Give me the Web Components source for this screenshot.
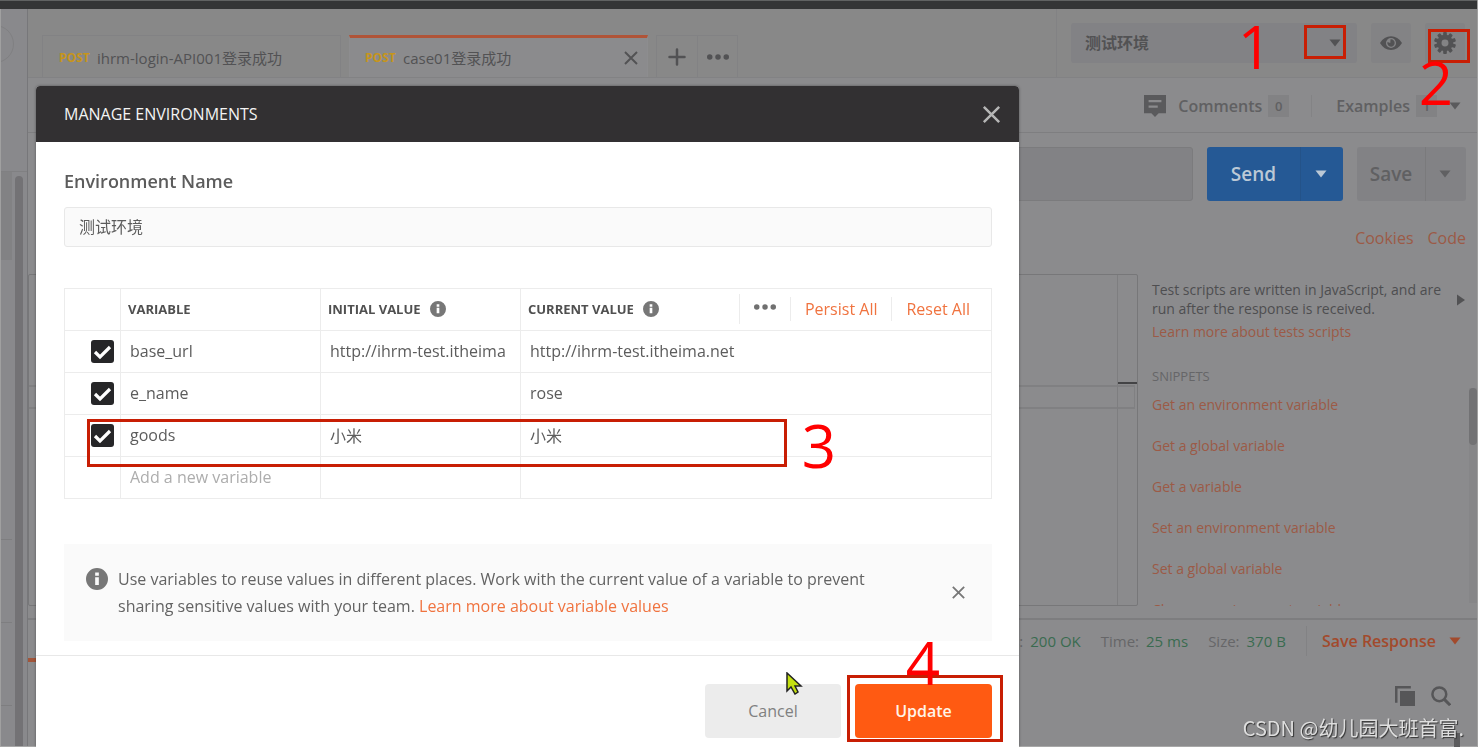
<!DOCTYPE html>
<html lang="en">
<head>
<meta charset="utf-8">
<title>Manage Environments</title>
<style>
  :root {
    --bg: #8b8b8d; --bar: #888888; --line: #7e7e80; --field: #828285;
    --ink: #525254; --muted: #666668; --accent: #9c5a46; --green: #3a6b50;
    --m-line: #ececec; --m-ink: #5c5c5c; --m-accent: #f0733f;
    font-family: "Open Sans", "Noto Sans CJK SC", sans-serif;
  }
  html, body { height: 100%; }
  body { margin: 0; overflow: hidden; background: var(--bg); color: var(--ink); font-size: 16px; }
</style>
</head>
<body>
<api-workspace></api-workspace>
<env-dialog heading="MANAGE ENVIRONMENTS"></env-dialog>
<step-marks></step-marks>

<script>
const BASE = `*{box-sizing:border-box} button,input,select{font:inherit;color:inherit;border:0;background:none;padding:0;margin:0;border-radius:0}
a{color:inherit;text-decoration:none} p,h1,h2,h3{margin:0;font:inherit}`;

function define(name, render) {
  customElements.define(name, class extends HTMLElement {
    connectedCallback() {
      if (this.shadowRoot) return;
      const t = document.createElement('template');
      t.innerHTML = '<style>' + BASE + '</style>' + render(this);
      this.attachShadow({ mode: 'open' }).append(t.content.cloneNode(true));
    }
  });
}

const gearTeeth = Array.from({ length: 10 }, (_, i) =>
  `<rect x="10" y="0" width="4" height="6" rx="1" transform="rotate(${i * 36} 12 12)"/>`).join('');
const ICONS = {
  close: '<path d="M4 4 20 20M20 4 4 20" fill="none" stroke="currentColor" stroke-width="2.6"/>',
  plus: '<path d="M12 3V21M3 12H21" fill="none" stroke="currentColor" stroke-width="3" stroke-linecap="round"/>',
  dots: '<circle cx="3" cy="12" r="3"/><circle cx="12" cy="12" r="3"/><circle cx="21" cy="12" r="3"/>',
  down: '<path d="M1 5H23L12 19Z"/>',
  right: '<path d="M4 1V23L20 12Z"/>',
  eye: '<path fill-rule="evenodd" d="M0 12C3 7 7 4.500 12 4.500S21 7 24 12C21 17 17 19.500 12 19.500S3 17 0 12ZM12 6.500A5.500 5.500 0 1 0 12 17.500 5.500 5.500 0 1 0 12 6.500ZM12 8A4 4 0 1 1 8.200 10.800L11.200 12 11.500 8Z"/>',
  gear: gearTeeth + '<path fill-rule="evenodd" d="M12 3A9 9 0 1 0 12 21 9 9 0 1 0 12 3ZM12 8.200A3.800 3.800 0 1 1 12 15.800 3.800 3.800 0 1 1 12 8.200Z"/>',
  comment: '<path fill-rule="evenodd" d="M0 0H24V20H16L12 24 8 20H0ZM5 5.500V8H19V5.500ZM5 11.500V14H15V11.500Z"/>',
  info: '<path fill-rule="evenodd" d="M12 0A12 12 0 1 0 12 24 12 12 0 1 0 12 0ZM10 5H14V8.500H10ZM10 10H14V18.500H10Z"/>',
  copy: '<path d="M6 6H24V24H6Z"/><path d="M1.500 20V1.500H19" fill="none" stroke="currentColor" stroke-width="3"/>',
  search: '<circle cx="10" cy="10" r="8.300" fill="none" stroke="currentColor" stroke-width="3"/><path d="M16 16 23 23" stroke="currentColor" stroke-width="3.600"/>'
};

define('ui-icon', el => `<style>:host{display:inline-flex;flex:none}svg{display:block;fill:currentColor}</style>
  <svg width="${el.getAttribute('size')}" height="${el.getAttribute('size')}" viewBox="0 0 24 24" aria-hidden="true">${ICONS[el.getAttribute('name')]}</svg>`);

define('request-tab', el => `<style>
  :host{display:flex;align-items:center;width:299px;height:42px;padding:2px 4px 0 16px;border:1px solid #828284;border-bottom:0;font-size:15px}
  :host([active]){background:#8b8b8d;border-color:#8d8d8f;border-top:3px solid #b05438;padding:0 3px 0 15px}
  b{color:#c6951c;font-size:12px;width:38px} span{flex:1;white-space:nowrap} button{display:flex;padding:4px}
  </style><b>POST</b><span><slot></slot></span>${el.hasAttribute('active') ? '<button aria-label="Close tab"><ui-icon name="close" size="18"></ui-icon></button>' : ''}`);

define('tab-strip', () => `<style>
  :host{display:flex;flex:1;align-items:flex-end;gap:8px;padding-left:14px;border-bottom:1px solid #828284}
  div{display:flex;border:1px solid #828284;border-bottom:0;height:42px}
  button{width:40px;display:flex;align-items:center;justify-content:center} button+button{border-left:1px solid #828284}
  </style><slot></slot><div><button aria-label="New tab"><ui-icon name="plus" size="20"></ui-icon></button><button aria-label="Tab options"><ui-icon name="dots" size="22"></ui-icon></button></div>`);

define('environment-picker', () => `<style>
  :host{display:flex;align-items:center;gap:14px;padding:0 12px 0 14px;border-left:1px solid #828284;border-bottom:1px solid #828284}
  label{display:flex;align-items:center;width:286px;height:40px;background:var(--field);border-radius:3px;padding-right:16px}
  select{appearance:none;flex:1;height:40px;padding-left:14px;font-weight:700;outline:0}
  button{width:40px;height:40px;border-radius:3px;background:#838385;display:flex;align-items:center;justify-content:center}
  </style><label><select aria-label="Environment"><option>测试环境</option></select><ui-icon name="down" size="12"></ui-icon></label>
  <button aria-label="Environment quick look"><ui-icon name="eye" size="22"></ui-icon></button>
  <button aria-label="Manage environments"><ui-icon name="gear" size="22"></ui-icon></button>`);

define('request-meta', () => `<style>
  :host{display:flex;justify-content:flex-end;align-items:center;height:55px;padding:2px 16px 0 0;border-bottom:1px solid var(--line);font-weight:600;color:#606062}
  button{display:flex;align-items:center} ui-icon{color:#5a5a5c}
  button:first-of-type ui-icon{margin-right:12px} button:last-of-type{padding-left:24px;border-left:1px solid #838385}
  button:first-of-type{margin-right:22px}
  i{font:600 13px/22px "Open Sans",sans-serif;width:21px;text-align:center;background:#828284;margin-left:6px}
  button:last-of-type ui-icon{margin-left:12px}
  </style><button><ui-icon name="comment" size="22"></ui-icon>Comments<i>0</i></button><button>Examples<i>1</i><ui-icon name="down" size="12"></ui-icon></button>`);

define('split-button', el => `<style>
  :host{display:flex;height:54px;border-radius:3px;background:#828285;color:#606062;font-size:19px;font-weight:600;overflow:hidden}
  :host([primary]){background:#255995;color:#bcc9d6}
  button{display:flex;align-items:center;justify-content:center}
  button:first-of-type{width:68px} button:last-of-type{width:41px;padding-right:2px;border-left:1px solid #7a7a7c}
  :host([primary]) button:first-of-type{width:93px} :host([primary]) button:last-of-type{width:43px;border-color:#245389}
  </style><button><slot></slot></button><button aria-label="More options"><ui-icon name="down" size="12"></ui-icon></button>`);

define('request-line', () => `<style>
  :host{display:flex;gap:14px;padding:14px 11px 0 12px}
  input{flex:1;min-width:0;height:54px;background:var(--field);border:1px solid #7b7b7d;border-radius:3px;outline:0}
  </style><input type="text" aria-label="Request URL"><split-button primary>Send</split-button><split-button>Save</split-button>`);

define('snippet-panel', () => `<style>
  :host{display:flex;width:339px;height:332px;overflow:hidden;font-size:14px;line-height:19px}
  section{flex:1;padding:6px 0 0 14px;white-space:nowrap} a{display:block;color:var(--accent)}
  p{color:#4e4e50} p+a{margin-top:4px} h3{margin:26px 0 0;color:var(--muted);font-size:13px}
  ul{list-style:none;margin:-2px 0 0;padding:0} li a{line-height:41px}
  .side{display:flex;width:18px;position:relative} .side ui-icon{margin:20px 0 0 -4px}
  .rail{position:absolute;right:0;top:114px;bottom:3px;width:8px;background:#868688}
  .rail i{display:block;height:57px;border-radius:4px;background:#727274}
  </style><section><p>Test scripts are written in JavaScript, and are<br>run after the response is received.</p>
  <a href="#">Learn more about tests scripts</a><h3>SNIPPETS</h3>
  <ul><li><a href="#">Get an environment variable</a></li><li><a href="#">Get a global variable</a></li><li><a href="#">Get a variable</a></li><li><a href="#">Set an environment variable</a></li><li><a href="#">Set a global variable</a></li><li><a href="#">Clear an environment variable</a></li></ul></section>
  <div class="side"><ui-icon name="right" size="12"></ui-icon><div class="rail"><i></i></div></div>`);

define('script-editor', () => `<style>
  :host{display:flex;flex:1;height:332px;border:1px solid #777779;border-radius:2px}
  .code{flex:1;border-right:1px solid var(--line);padding-top:110px}
  .ruler{width:19px;padding-top:107px} .ruler::before{content:"";display:block;height:2px;margin-bottom:1px;background:#434345}
  .ruler::after,.code::after{content:"";display:block;height:20px;border:solid #808082;border-width:2px 0}
  .ruler::after{margin-right:2px;border-right-width:1px}
  </style><div class="code"></div><div class="ruler"></div>`);

define('response-bar', () => `<style>
  :host{display:flex;justify-content:flex-end;align-items:center;height:44px;border-top:2px solid #7d7d7f;padding-right:16px;font-size:15px;color:var(--muted)}
  span{margin-right:20px;white-space:nowrap} b{font-weight:400;color:var(--green);margin-left:7px}
  button{display:flex;align-items:center;gap:13px;height:30px;padding-left:15px;border-left:1px solid #828284;font-size:16px;font-weight:600;color:#a24a2c}
  </style><span>Status:<b>200 OK</b></span><span>Time:<b>25 ms</b></span><span>Size:<b>370 B</b></span>
  <button>Save Response<ui-icon name="down" size="12"></ui-icon></button>`);

define('side-rail', () => `<style>
  :host{display:flex;flex-direction:column;width:27px;background:#89898c;border-left:1px solid #a0a0a0;overflow:hidden}
  .top{height:163px;padding-top:16px;border-bottom:1px solid #808082}
  .top::before{content:"";display:block;width:36px;height:36px;margin-left:-25px;border:1px solid #808082;border-radius:50%}
  .list{flex:1;display:flex;justify-content:space-between;padding-right:4px}
  .items{width:11px} .items i{display:block;height:83px;border-bottom:1px solid #7e7e80} .items i:first-child{height:88px;background:#828284;border:0;margin-bottom:197px}
  .thumb{width:8px;margin-top:4px;background:#737275;border-radius:4px 4px 0 0}
  </style><div class="top"></div><div class="list"><div class="items"><i></i><i></i><i></i><i></i></div><div class="thumb"></div></div>`);

define('api-workspace', () => `<style>
  :host{display:flex;flex-direction:column;height:100%;border-right:1px solid #a0a0a0;border-bottom:1px solid #a8a8a8;box-sizing:border-box}
  header{height:9px;background:#343536;border-top:1px solid #606262}
  .cols{flex:1;display:flex;min-height:0} main{flex:1;min-width:0;border-left:1px solid #77777a}
  .bar{display:flex;height:69px;background:var(--bar)}
  nav{display:flex;justify-content:flex-end;gap:14px;padding:25px 11px 24px 0;line-height:24px;color:var(--accent)}
  .work{display:flex;margin-bottom:12px}
  .marker{height:4px;width:60px;background:#a2553a;margin-top:-4px}
  .tools{display:flex;justify-content:flex-end;gap:16px;padding:24px 26px 0 0;color:#565658}
  .thumb{height:14px;width:6px;background:#5c5c5e;margin:27px 17px 0 auto}
  </style><header></header><div class="cols"><side-rail></side-rail><main>
  <div class="bar"><tab-strip><request-tab>ihrm-login-API001登录成功</request-tab><request-tab active>case01登录成功</request-tab></tab-strip><environment-picker></environment-picker></div>
  <request-meta></request-meta><request-line></request-line>
  <nav><a href="#">Cookies</a><a href="#">Code</a></nav>
  <div class="work"><script-editor></script-editor><snippet-panel></snippet-panel></div>
  <response-bar></response-bar><div class="marker"></div>
  <div class="tools"><ui-icon name="copy" size="20"></ui-icon><ui-icon name="search" size="20"></ui-icon></div><div class="thumb"></div>
  </main></div>`);

const row = (key, a, b) => `<tr><td class="c"><input type="checkbox" checked aria-label="Enable ${key}"></td><td>${key}</td><td>${a}</td><td>${b}</td></tr>`;
define('variable-table', () => `<style>
  :host{display:block;color:var(--m-ink)}
  table{width:100%;table-layout:fixed;border-collapse:collapse}
  th,td{border:1px solid var(--m-line);height:42px;padding:0 0 2px 9px;text-align:left;white-space:nowrap;overflow:hidden}
  th{font-size:13px;font-weight:700;color:#505050;padding-left:7px} th ui-icon{color:#777;margin-left:9px}
  div{display:flex;align-items:center} .menu{margin-left:auto;height:30px;padding:0 14px;border-left:1px solid var(--m-line);color:#707070}
  .act{height:24px;padding:0 14px;border-left:1px solid var(--m-line);color:var(--m-accent);font-size:16px;font-weight:400}
  .act:last-child{padding-right:21px}
  td.c{padding:0 6px 2px 0;text-align:right}
  [type=checkbox]{appearance:none;display:inline-block;vertical-align:middle;width:23px;height:23px;border-radius:3px;background:#262628 url("data:image/svg+xml,%3Csvg xmlns='http://www.w3.org/2000/svg' viewBox='0 0 23 23'%3E%3Cpath d='M4 12 9 17 19 7' fill='none' stroke='white' stroke-width='3.200'/%3E%3C/svg%3E")}
  [type=text]{width:100%;outline:0} [type=text]::placeholder{color:#adadad;opacity:1}
  </style><table><colgroup><col style="width:56px"><col style="width:200px"><col style="width:200px"><col></colgroup>
  <thead><tr><th></th><th>VARIABLE</th><th><div>INITIAL VALUE<ui-icon name="info" size="16"></ui-icon></div></th>
  <th><div>CURRENT VALUE<ui-icon name="info" size="16"></ui-icon><button class="menu" aria-label="Columns"><ui-icon name="dots" size="22" style="margin:0;color:inherit"></ui-icon></button><button class="act">Persist All</button><button class="act">Reset All</button></div></th></tr></thead>
  <tbody>${row('base_url', 'http://ihrm-test.itheima', 'http://ihrm-test.itheima.net')}${row('e_name', '', 'rose')}${row('goods', '小米', '小米')}
  <tr><td></td><td><input type="text" placeholder="Add a new variable" aria-label="Add a new variable"></td><td></td><td></td></tr></tbody></table>`);

define('info-notice', () => `<style>
  :host{display:flex;align-items:center;min-height:97px;padding:0 25px 0 22px;background:#fafafa;line-height:27px;color:#636363}
  ui-icon{color:#777} .i{align-self:flex-start;margin:24px 10px 0 0} p{flex:1;padding-right:60px} button{display:flex}
  </style><ui-icon class="i" name="info" size="22"></ui-icon><p><slot></slot></p><button aria-label="Dismiss"><ui-icon name="close" size="17"></ui-icon></button>`);

define('env-dialog', el => `<style>
  :host{position:fixed;inset:86px 459px 0 36px;display:flex;flex-direction:column;background:#fff;border-radius:4px 4px 0 0;box-shadow:0 0 3px #0006;color:var(--m-ink);overflow:hidden}
  header{display:flex;align-items:center;justify-content:space-between;height:56px;padding:0 16px 0 28px;background:#323032;color:#f4f4f4}
  header button{display:flex;color:#b5b5b5}
  .body{padding:27px 27px 14px 28px;border-bottom:1px solid #e8e8e8}
  label{display:block;font-size:18px;font-weight:600;line-height:24px;margin-bottom:14px}
  #name{display:block;width:100%;height:40px;padding:0 14px 2px;background:#fafafa;border:1px solid #e8e8e8;border-radius:3px;outline:0;margin-bottom:41px}
  info-notice{margin-top:45px} info-notice a{color:var(--m-accent)}
  footer{display:flex;justify-content:flex-end;gap:14px;padding:28px 27px 0}
  footer button{width:136px;height:54px;border-radius:4px;background:#ececec;color:#808080}
  footer .go{width:137px;background:#ff5a12;color:#fff4e8;font-weight:600}
  </style><header><h2>${el.getAttribute('heading')}</h2><button aria-label="Close"><ui-icon name="close" size="23"></ui-icon></button></header>
  <div class="body"><label for="name">Environment Name</label><input id="name" type="text" value="测试环境">
  <variable-table></variable-table>
  <info-notice>Use variables to reuse values in different places. Work with the current value of a variable to prevent sharing sensitive values with your team. <a href="#">Learn more about variable values</a></info-notice></div>
  <footer><button>Cancel</button><button class="go">Update</button></footer>`);

/* Numbered callouts, pointer and credit float above the whole screen. */
define('step-marks', () => `<style>
  :host{position:fixed;inset:0;pointer-events:none}
  i,b,svg,small{position:absolute} i{border:3px solid #c81e04}
  b{font-weight:500;font-size:60px;line-height:60px;color:#f00}
  small{right:14px;bottom:4px;font:20px/30px "Noto Sans CJK SC",sans-serif;color:#dedede;text-shadow:1px 1px 1px #333;white-space:nowrap}
  </style>
  <i style="right:132px;top:25px;width:42px;height:34px"></i><b style="right:206px;top:16px">1</b>
  <i style="right:8px;top:29px;width:42px;height:34px"></i><b style="right:25px;top:52px">2</b>
  <i style="left:87px;right:691px;top:419px;height:48px"></i><b style="right:642px;top:415px">3</b>
  <i style="right:475px;top:675px;width:156px;height:67px"></i><b style="right:538px;top:632px">4</b>
  <svg style="right:675px;top:672px" width="17" height="23" viewBox="0 0 17 23"><path d="M1 1V19L5 15 9 22 12 20 9 14H15Z" fill="#c4e010" stroke="#222" stroke-width="1.500"/></svg>
  <small>CSDN @幼儿园大班首富.</small>`);
</script>
</body>
</html>
